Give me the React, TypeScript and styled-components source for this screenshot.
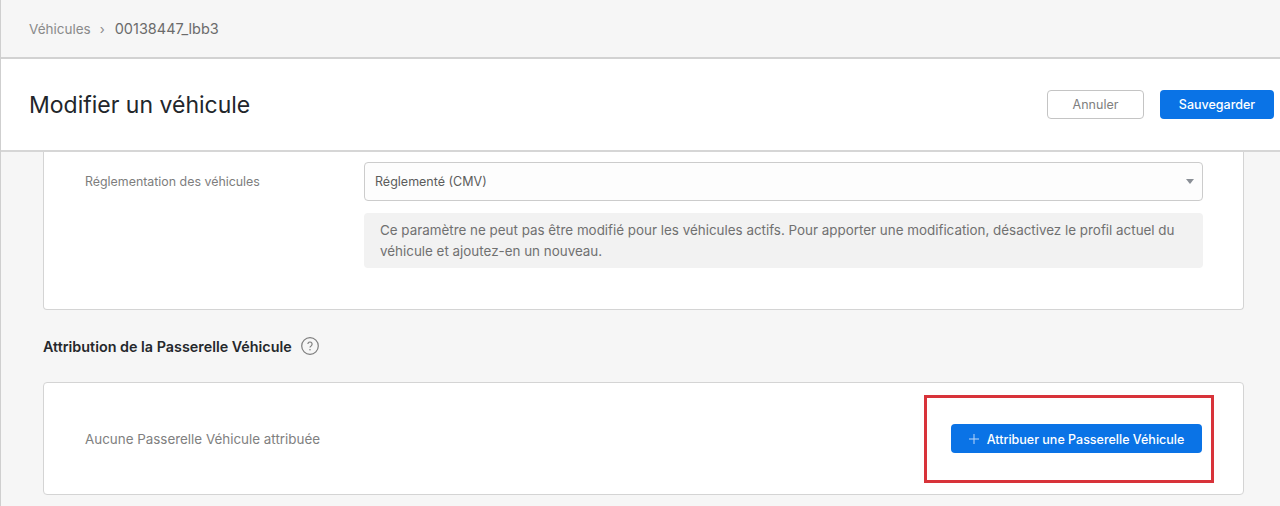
import React from 'react'
import styled, { createGlobalStyle } from 'styled-components'

const GlobalStyle = createGlobalStyle`
  html, body {
    margin: 0;
    height: 100%;
    overflow: hidden;
    background: #f6f6f6;
    font-family: Inter, "Liberation Sans", sans-serif;
  }
  * {
    box-sizing: border-box;
  }
`

const Page = styled.div`
  position: relative;
  width: 1280px;
  height: 506px;
  overflow: hidden;
  border-left: 1px solid #cfcfcf;
`

const Breadcrumbs = styled.nav`
  display: flex;
  align-items: center;
  height: 59px;
  padding-left: 28px;
  border-bottom: 2px solid #d2d2d2;
  font-size: 13.5px;
  color: #8a8a8a;
`

const Separator = styled.span`
  margin: 0 10px 0 9px;
  font-size: 13px;
`

const CurrentCrumb = styled.span`
  font-size: 14.5px;
  color: #6b6b6b;
`

const Header = styled.header`
  display: flex;
  align-items: center;
  justify-content: space-between;
  height: 93px;
  padding: 0 6px 1px 28px;
  background: #fff;
  border-bottom: 2px solid #d6d6d6;
`

const Title = styled.h1`
  margin: 0;
  padding-top: 2px;
  font-size: 23px;
  font-weight: 400;
  color: #22262b;
`

const Actions = styled.div`
  display: flex;
  gap: 16px;
`

const Button = styled.button<{ $primary?: boolean; $width: number }>`
  display: flex;
  align-items: center;
  justify-content: center;
  gap: 8px;
  width: ${({ $width }) => $width}px;
  height: 29px;
  padding: 1px 0 0;
  border-radius: 4px;
  border: ${({ $primary }) => ($primary ? 'none' : '1px solid #c4c4c4')};
  background: ${({ $primary }) => ($primary ? '#0a73e6' : '#fff')};
  color: ${({ $primary }) => ($primary ? '#fff' : '#808080')};
  font-family: inherit;
  font-size: 12.5px;
  font-weight: ${({ $primary }) => ($primary ? 500 : 400)};
`

const Content = styled.main`
  display: flex;
  flex-direction: column;
  padding: 0 36px 0 42px;
`

const VehicleCard = styled.section`
  height: 158px;
  padding-top: 10px;
  background: #fff;
  border: 1px solid #d4d4d4;
  border-top: none;
  border-radius: 0 0 4px 4px;
`

const FieldRow = styled.div`
  display: flex;
  padding: 0 40px 0 41px;
`

const FieldLabel = styled.div`
  width: 279px;
  padding-top: 12px;
  font-size: 12.4px;
  color: #7d7d7d;
`

const FieldBody = styled.div`
  display: flex;
  flex: 1;
  flex-direction: column;
  gap: 12px;
`

const Select = styled.div`
  display: flex;
  align-items: center;
  justify-content: space-between;
  height: 39px;
  padding: 0 8px 0 10px;
  background: #fdfdfd;
  border: 1px solid #cccccc;
  border-radius: 4px;
  font-size: 12.5px;
  color: #5c5c5c;
`

const Caret = styled.span`
  width: 0;
  height: 0;
  border-left: 4px solid transparent;
  border-right: 4px solid transparent;
  border-top: 5px solid #8a8f96;
`

const Notice = styled.div`
  padding: 7px 16px 0;
  height: 55px;
  background: #f2f2f2;
  border-radius: 4px;
  font-size: 13.4px;
  line-height: 20.5px;
  color: #707070;
`

const SectionHeading = styled.div`
  display: flex;
  align-items: center;
  gap: 9px;
  height: 73px;
  padding-bottom: 1px;
  margin-bottom: -1px;
  font-size: 14.35px;
  font-weight: 600;
  color: #25282c;
`

const HelpIcon = styled.svg`
  width: 18px;
  height: 18px;
  color: #7e7e7e;
`

const GatewayCard = styled.section`
  display: flex;
  align-items: center;
  justify-content: space-between;
  height: 113px;
  padding: 0 41px;
  background: #fff;
  border: 1px solid #d4d4d4;
  border-radius: 4px;
`

const EmptyText = styled.span`
  font-size: 13.4px;
  color: #808080;
`

const Highlight = styled.div`
  position: absolute;
  left: 923px;
  top: 395px;
  width: 290px;
  height: 88px;
  border: 3px solid #d8333a;
  pointer-events: none;
`

const PlusIcon = styled.svg`
  width: 10px;
  height: 10px;
  color: #bcd8f8;
`

const App = () => (
  <>
    <GlobalStyle />
    <Page>
      <Breadcrumbs>
        Véhicules
        <Separator>›</Separator>
        <CurrentCrumb>00138447_lbb3</CurrentCrumb>
      </Breadcrumbs>
      <Header>
        <Title>Modifier un véhicule</Title>
        <Actions>
          <Button $width={97}>Annuler</Button>
          <Button $primary $width={114}>Sauvegarder</Button>
        </Actions>
      </Header>
      <Content>
        <VehicleCard>
          <FieldRow>
            <FieldLabel>Réglementation des véhicules</FieldLabel>
            <FieldBody>
              <Select>
                Réglementé (CMV)
                <Caret />
              </Select>
              <Notice>
                Ce paramètre ne peut pas être modifié pour les véhicules actifs. Pour apporter une modification, désactivez le profil actuel du véhicule et ajoutez-en un nouveau.
              </Notice>
            </FieldBody>
          </FieldRow>
        </VehicleCard>
        <SectionHeading>
          Attribution de la Passerelle Véhicule
          <HelpIcon viewBox="0 0 18 18" fill="none">
            <circle cx="9" cy="9" r="8.3" stroke="currentColor" strokeWidth="1.2" />
            <path d="M6.9 7.1a2.1 2.1 0 1 1 3.2 1.8c-.7.4-1.1.8-1.1 1.6" stroke="currentColor" strokeWidth="1.2" />
            <circle cx="9" cy="12.8" r=".8" fill="currentColor" />
          </HelpIcon>
        </SectionHeading>
        <GatewayCard>
          <EmptyText>Aucune Passerelle Véhicule attribuée</EmptyText>
          <Button $primary $width={251}>
            <PlusIcon viewBox="0 0 10 10" fill="none">
              <path d="M5 0v10M0 5h10" stroke="currentColor" strokeWidth="1" />
            </PlusIcon>
            Attribuer une Passerelle Véhicule
          </Button>
        </GatewayCard>
      </Content>
      <Highlight />
    </Page>
  </>
)

export default App
